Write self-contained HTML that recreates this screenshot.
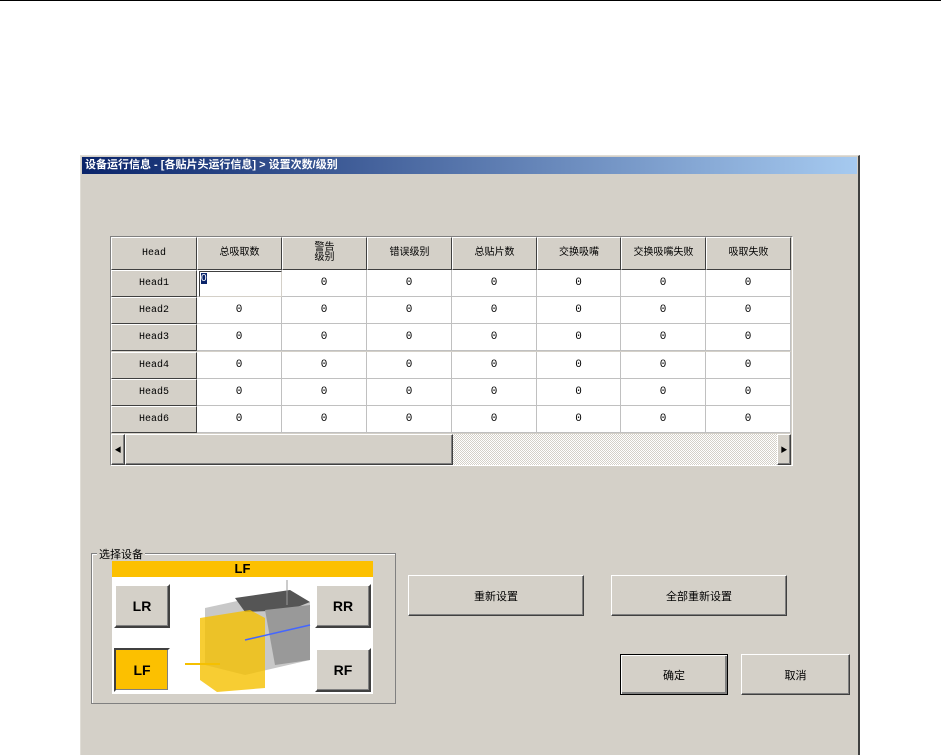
<!DOCTYPE html>
<html><head><meta charset="utf-8"><style>
*{margin:0;padding:0;box-sizing:border-box}
body{width:941px;height:751px;background:#fff;position:relative;overflow:hidden;font-family:"Liberation Sans","Noto Sans CJK SC","WenQuanYi Zen Hei",sans-serif;font-size:11px;color:#000}
.a{position:absolute}
.dlg{left:80px;top:155px;width:780px;height:600px;background:#d4d0c8;border-left:1px solid #e0ddd6;border-top:1px solid #e0ddd6;border-right:2px solid #404040}
.title{left:82px;top:157px;width:775px;height:17px;background:linear-gradient(90deg,#0a246a,#a6caf0);color:#fff;font-weight:bold;font-size:11px;line-height:17px;padding-left:3px}
.btn{position:absolute;background:#d4d0c8;border:1px solid;border-color:#fff #404040 #404040 #fff;box-shadow:inset -1px -1px 0 #808080;display:flex;align-items:center;justify-content:center;font-size:11px}
.c{position:absolute;display:flex;align-items:center;justify-content:center;font-size:11px}
.hd{background:#d4d0c8;border:1px solid;border-color:#fff #404040 #404040 #fff;font-family:"Liberation Mono","Noto Sans CJK SC",monospace;font-size:10px}
.cell{background:#fff;border-right:1px solid #c0c0c0;border-bottom:1px solid #c0c0c0;font-family:"Liberation Mono",monospace;font-size:11px}
.big{font-size:14px;font-weight:bold}
</style></head><body>
<div class="a" style="left:0;top:0;width:941px;height:1px;background:#000"></div>
<div class="a dlg"></div>
<div class="a title">设备运行信息 - [各贴片头运行信息] &gt; 设置次数/级别</div>
<div class="a" style="left:110px;top:236px;width:683px;height:230px;border:1px solid;border-color:#808080 #fff #fff #808080;background:#d4d0c8"></div>
<div id="g"></div>
<script>
var cols=[111,197,282,367,452,537,621,706,791];
var hdr=["Head","总吸取数","警告<br>级别","错误级别","总贴片数","交换吸嘴","交换吸嘴失败","吸取失败"];
var h='';
for(var i=0;i<8;i++)h+='<div class="c hd" style="left:'+cols[i]+'px;top:237px;width:'+(cols[i+1]-cols[i])+'px;height:33px;line-height:10px;text-align:center">'+hdr[i]+'</div>';
for(var r=0;r<6;r++){var y=270+r*27.2;
h+='<div class="c hd" style="left:111px;top:'+y+'px;width:86px;height:27px">Head'+(r+1)+'</div>';
for(var i=1;i<8;i++){var t=(r==0&&i==1)?'':'0';h+='<div class="c cell" style="left:'+cols[i]+'px;top:'+y+'px;width:'+(cols[i+1]-cols[i])+'px;height:27px">'+t+'</div>';}}
document.getElementById('g').innerHTML=h;
</script>
<div class="a" style="left:199px;top:271px;width:83px;height:26px;background:#fff;border:1px solid;border-color:#404040 #d4d0c8 #d4d0c8 #404040"><span style="background:#0a246a;color:#fff;font-size:10px;margin-left:1px">0</span></div>
<div class="a" style="left:111px;top:434px;width:680px;height:31px;background:repeating-conic-gradient(#d4d0c8 0 25%,#fff 0 50%) 0 0/2px 2px"></div>
<div class="btn" style="left:111px;top:434px;width:14px;height:31px;font-size:7px">◀</div>
<div class="btn" style="left:125px;top:434px;width:328px;height:31px"></div>
<div class="btn" style="left:777px;top:434px;width:14px;height:31px;font-size:7px">▶</div>
<div class="a" style="left:91px;top:553px;width:305px;height:151px;border:1px solid #808080;box-shadow:1px 1px 0 #fff inset"></div>
<div class="a" style="left:97px;top:546px;background:#d4d0c8;padding:0 2px;font-size:11px">选择设备</div>
<div class="a" style="left:112px;top:561px;width:261px;height:16px;background:#fcc000;text-align:center;font-weight:bold;font-size:13px;line-height:16px">LF</div>
<div class="a" style="left:112px;top:577px;width:261px;height:117px;background:#fff"></div>
<svg class="a" style="left:185px;top:580px" width="135" height="112">
<polygon points="20,28 80,15 125,22 125,80 60,95 20,85" fill="#c8c8c8"/>
<polygon points="50,18 105,10 125,22 105,30 60,32" fill="#555"/>
<polygon points="80,30 125,25 125,80 90,85" fill="#999"/>
<polygon points="15,38 65,30 80,38 80,108 32,112 15,100" fill="#f5c000" opacity=".8"/>
<line x1="-15" y1="84" x2="35" y2="84" stroke="#f5c000" stroke-width="2"/>
<line x1="60" y1="60" x2="125" y2="45" stroke="#4466ff" stroke-width="1.5"/>
<line x1="102" y1="0" x2="102" y2="25" stroke="#999"/>
</svg>
<div class="btn big" style="left:114px;top:584px;width:56px;height:44px;border:2px solid;border-color:#fff #404040 #404040 #fff">LR</div>
<div class="btn big" style="left:114px;top:648px;width:56px;height:44px;background:#fcc000;border:2px solid;border-color:#404040 #fff #fff #404040">LF</div>
<div class="btn big" style="left:315px;top:584px;width:56px;height:44px;border:2px solid;border-color:#fff #404040 #404040 #fff">RR</div>
<div class="btn big" style="left:315px;top:648px;width:56px;height:44px;border:2px solid;border-color:#fff #404040 #404040 #fff">RF</div>
<div class="btn" style="left:408px;top:575px;width:176px;height:41px">重新设置</div>
<div class="btn" style="left:611px;top:575px;width:176px;height:41px">全部重新设置</div>
<div class="btn" style="left:620px;top:654px;width:108px;height:41px;border:1px solid #000;box-shadow:inset 1px 1px 0 #fff,inset -2px -2px 0 #808080">确定</div>
<div class="btn" style="left:741px;top:654px;width:109px;height:41px">取消</div>
</body></html>
